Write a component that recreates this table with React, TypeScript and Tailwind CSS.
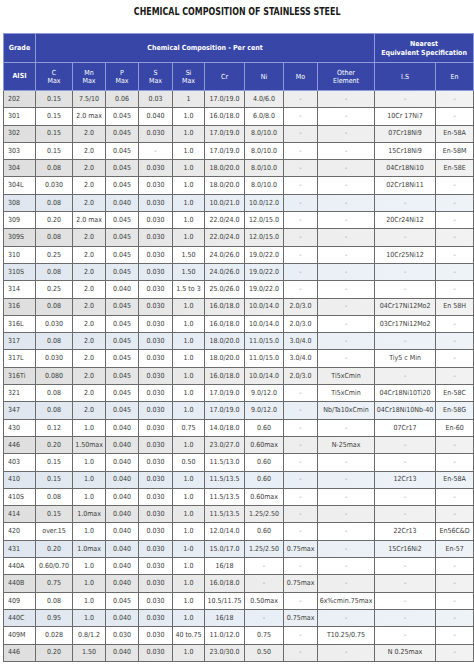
const FONT = '"Liberation Sans Narrow", "DejaVu Sans Condensed", "Liberation Sans", sans-serif';

type Row = { grade: string; vals: string[]; tone: 'w' | 'g' | 'b' };

// C, Mn, P, S, Si, Cr, Ni, Mo, Other, IS, En
const rows: Row[] = [
  { grade: '202', tone: 'g', vals: ['0.15', '7.5/10', '0.06', '0.03', '1', '17.0/19.0', '4.0/6.0', '-', '-', '-', '-'] },
  { grade: '301', tone: 'w', vals: ['0.15', '2.0 max', '0.045', '0.040', '1.0', '16.0/18.0', '6.0/8.0', '-', '-', '10Cr 17Ni7', '-'] },
  { grade: '302', tone: 'g', vals: ['0.15', '2.0', '0.045', '0.030', '1.0', '17.0/19.0', '8.0/10.0', '-', '-', '07Cr18Ni9', 'En-58A'] },
  { grade: '303', tone: 'w', vals: ['0.15', '2.0', '0.045', '-', '1.0', '17.0/19.0', '8.0/10.0', '-', '-', '15Cr18Ni9', 'En-58M'] },
  { grade: '304', tone: 'g', vals: ['0.08', '2.0', '0.045', '0.030', '1.0', '18.0/20.0', '8.0/10.0', '-', '-', '04Cr18Ni10', 'En-58E'] },
  { grade: '304L', tone: 'w', vals: ['0.030', '2.0', '0.045', '0.030', '1.0', '18.0/20.0', '8.0/10.0', '-', '-', '02Cr18Ni11', '-'] },
  { grade: '308', tone: 'b', vals: ['0.08', '2.0', '0.040', '0.030', '1.0', '10.0/21.0', '10.0/12.0', '-', '-', '-', '-'] },
  { grade: '309', tone: 'w', vals: ['0.20', '2.0 max', '0.045', '0.030', '1.0', '22.0/24.0', '12.0/15.0', '-', '-', '20Cr24Ni12', '-'] },
  { grade: '309S', tone: 'g', vals: ['0.08', '2.0', '0.045', '0.030', '1.0', '22.0/24.0', '12.0/15.0', '-', '-', '-', '-'] },
  { grade: '310', tone: 'w', vals: ['0.25', '2.0', '0.045', '0.030', '1.50', '24.0/26.0', '19.0/22.0', '-', '-', '10Cr25Ni12', '-'] },
  { grade: '310S', tone: 'b', vals: ['0.08', '2.0', '0.045', '0.030', '1.50', '24.0/26.0', '19.0/22.0', '-', '-', '-', '-'] },
  { grade: '314', tone: 'w', vals: ['0.25', '2.0', '0.040', '0.030', '1.5 to 3', '25.0/26.0', '19.0/22.0', '-', '-', '-', '-'] },
  { grade: '316', tone: 'g', vals: ['0.08', '2.0', '0.045', '0.030', '1.0', '16.0/18.0', '10.0/14.0', '2.0/3.0', '-', '04Cr17Ni12Mo2', 'En 58H'] },
  { grade: '316L', tone: 'w', vals: ['0.030', '2.0', '0.045', '0.030', '1.0', '16.0/18.0', '10.0/14.0', '2.0/3.0', '-', '03Cr17Ni12Mo2', '-'] },
  { grade: '317', tone: 'b', vals: ['0.08', '2.0', '0.045', '0.030', '1.0', '18.0/20.0', '11.0/15.0', '3.0/4.0', '-', '-', '-'] },
  { grade: '317L', tone: 'w', vals: ['0.030', '2.0', '0.045', '0.030', '1.0', '18.0/20.0', '11.0/15.0', '3.0/4.0', '-', 'Tiy5 c Min', '-'] },
  { grade: '316Ti', tone: 'g', vals: ['0.080', '2.0', '0.045', '0.030', '1.0', '16.0/18.0', '10.0/14.0', '2.0/3.0', 'Ti5xCmin', '-', '-'] },
  { grade: '321', tone: 'w', vals: ['0.08', '2.0', '0.045', '0.030', '1.0', '17.0/19.0', '9.0/12.0', '-', 'Ti5xCmin', '04Cr18Ni10Ti20', 'En-58C'] },
  { grade: '347', tone: 'b', vals: ['0.08', '2.0', '0.045', '0.030', '1.0', '17.0/19.0', '9.0/12.0', '-', 'Nb/Ta10xCmin', '04Cr18Ni10Nb-40', 'En-58G'] },
  { grade: '430', tone: 'w', vals: ['0.12', '1.0', '0.040', '0.030', '0.75', '14.0/18.0', '0.60', '-', '-', '07Cr17', 'En-60'] },
  { grade: '446', tone: 'g', vals: ['0.20', '1.50max', '0.040', '0.030', '1.0', '23.0/27.0', '0.60max', '-', 'N-25max', '-', '-'] },
  { grade: '403', tone: 'w', vals: ['0.15', '1.0', '0.040', '0.030', '0.50', '11.5/13.0', '0.60', '-', '-', '-', '-'] },
  { grade: '410', tone: 'b', vals: ['0.15', '1.0', '0.040', '0.030', '1.0', '11.5/13.5', '0.60', '-', '-', '12Cr13', 'En-58A'] },
  { grade: '410S', tone: 'w', vals: ['0.08', '1.0', '0.040', '0.030', '1.0', '11.5/13.5', '0.60max', '-', '-', '-', '-'] },
  { grade: '414', tone: 'g', vals: ['0.15', '1.0max', '0.040', '0.030', '1.0', '11.5/13.5', '1.25/2.50', '-', '-', '-', '-'] },
  { grade: '420', tone: 'w', vals: ['over.15', '1.0', '0.040', '0.030', '1.0', '12.0/14.0', '0.60', '-', '-', '22Cr13', 'En56C&D'] },
  { grade: '431', tone: 'b', vals: ['0.20', '1.0max', '0.040', '0.030', '1-0', '15.0/17.0', '1.25/2.50', '0.75max', '-', '15Cr16Ni2', 'En-57'] },
  { grade: '440A', tone: 'w', vals: ['0.60/0.70', '1.0', '0.040', '0.030', '1.0', '16/18', '-', '-', '-', '-', '-'] },
  { grade: '440B', tone: 'g', vals: ['0.75', '1.0', '0.040', '0.030', '1.0', '16.0/18.0', '-', '0.75max', '-', '-', '-'] },
  { grade: '409', tone: 'w', vals: ['0.08', '1.0', '0.045', '0.030', '1.0', '10.5/11.75', '0.50max', '-', '6x%cmin.75max', '-', '-'] },
  { grade: '440C', tone: 'b', vals: ['0.95', '1.0', '0.040', '0.030', '1.0', '16/18', '-', '0.75max', '-', '-', '-'] },
  { grade: '409M', tone: 'w', vals: ['0.028', '0.8/1.2', '0.030', '0.030', '40 to.75', '11.0/12.0', '0.75', '-', 'T10.25/0.75', '-', '-'] },
  { grade: '446', tone: 'g', vals: ['0.20', '1.50', '0.040', '0.030', '1.0', '23.0/30.0', '0.50', '-', '-', 'N 0.25max', '-'] },
];

const widths = ['w-[32px]', 'w-[37px]', 'w-[33px]', 'w-[33px]', 'w-[34px]', 'w-[32px]', 'w-[40px]', 'w-[39px]', 'w-[34px]', 'w-[57px]', 'w-[61px]', 'w-[38px]'];

const subHeads: [string, string?][] = [
  ['C', 'Max'], ['Mn', 'Max'], ['P', 'Max'], ['S', 'Max'], ['Si', 'Max'],
  ['Cr'], ['Ni'], ['Mo'], ['Other', 'Element'], ['I.S'], ['En'],
];

const toneBg = {
  w: 'bg-white',
  g: 'bg-gradient-to-r from-[#dedede] via-[#ececec] to-[#f2f2f2]',
  b: 'bg-gradient-to-r from-[#dfe6ef] via-[#e8eef5] to-[#eef3f8]',
};

export default function App() {
  return (
    <div className="w-[474px] h-[671px] bg-white overflow-hidden" style={{ fontFamily: FONT }}>
      <div className="h-[33px] pt-[5px] flex justify-center items-start">
        <h1 className="scale-x-[0.8] text-[11px] leading-[14px] font-bold text-[#1a1a1a] whitespace-nowrap">
          CHEMICAL COMPOSITION OF STAINLESS STEEL
        </h1>
      </div>

      <table className="ml-[3px] w-[470px] table-fixed border-collapse">
        <colgroup>
          {widths.map((w, i) => (
            <col key={i} className={w} />
          ))}
        </colgroup>
        <thead className="bg-[#3847a7] text-white">
          <tr className="h-[29px]">
            <th className="border border-[#8f9bd8] text-[7px] font-bold">Grade</th>
            <th colSpan={9} className="border border-[#8f9bd8] text-[7px] font-bold">
              Chemical Composition - Per cent
            </th>
            <th colSpan={2} className="border border-[#8f9bd8] text-[7px] font-bold leading-[9px] pt-[2px]">
              Nearest
              <br />
              Equivalent Specification
            </th>
          </tr>
          <tr className="h-[28px]">
            <th className="border border-[#8f9bd8] text-[7px] font-bold">AISI</th>
            {subHeads.map(([a, b], i) => (
              <th key={i} className="border border-[#8f9bd8] text-[7px] font-normal leading-[8px]">
                {a}
                {b && (
                  <>
                    <br />
                    {b}
                  </>
                )}
              </th>
            ))}
          </tr>
        </thead>
        <tbody className="text-[#3a3a3a]">
          {rows.map((r, i) => (
            <tr key={i} className={`h-[17.3px] ${toneBg[r.tone]}`}>
              <td className="border border-[#6b6b6b] pl-[4px] text-[7px] text-left">{r.grade}</td>
              {r.vals.map((v, j) => (
                <td
                  key={j}
                  className={`border border-[#6b6b6b] text-center text-[7px] whitespace-nowrap overflow-hidden ${v === '-' ? 'text-[#8a8a8a]' : ''}`}
                >
                  {v}
                </td>
              ))}
            </tr>
          ))}
        </tbody>
      </table>
    </div>
  );
}
